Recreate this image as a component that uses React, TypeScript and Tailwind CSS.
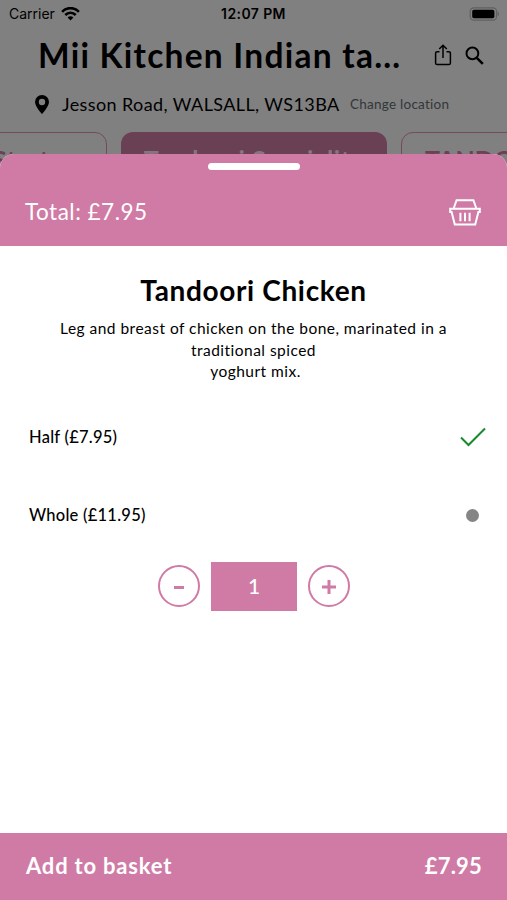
import type { ReactNode } from "react";

function StatusBar() {
  return (
    <div className="grid h-[27px] grid-cols-3 items-center pl-[9px] pr-[7px] font-['Inter',sans-serif] text-[14px]">
      <div className="flex items-center gap-[6px]">
        <span>Carrier</span>
        <svg viewBox="0 0 20 15" className="h-[14px] w-[19px]" fill="none" stroke="#000" strokeWidth="2.8">
          <path d="M1 5.2C6-.1 14-.1 19 5.2" />
          <path d="M4.4 8.6c3.2-3.2 8-3.2 11.2 0" />
          <path d="M10 14.5 6.9 11.2c1.8-1.6 4.4-1.6 6.2 0z" fill="#000" stroke="none" />
        </svg>
      </div>
      <span className="-ml-[2px] text-center text-[14px] font-semibold tracking-[0.4px] whitespace-nowrap">
        12:07 PM
      </span>
      <svg viewBox="0 0 31 14" className="h-[14px] w-[31px] justify-self-end">
        <rect x="1.2" y=".8" width="26.4" height="12.4" rx="3.6" fill="none" stroke="#606060" strokeWidth="1.2" />
        <rect x="3.2" y="2.8" width="22.2" height="8.4" rx="1.8" fill="#000" />
        <path d="M28.6 4.8c1.8.6 1.8 3.8 0 4.4z" fill="#606060" />
      </svg>
    </div>
  );
}

function RestaurantHeader() {
  return (
    <header>
      <div className="flex h-[55px] items-center pt-px pl-[38px] pr-[22px]">
        <h1 className="w-[396px] text-[33.5px] font-bold tracking-[1.25px] whitespace-nowrap">
          Mii Kitchen Indian ta…
        </h1>
        <svg viewBox="0 0 18 22" className="h-[22px] w-[18px] shrink-0" fill="none" stroke="#000" strokeWidth="1.5">
          <path d="M5.5 7.7H3.2c-1 0-1.6.6-1.6 1.6v9.6c0 1 .6 1.6 1.6 1.6h11.6c1 0 1.6-.6 1.6-1.6V9.3c0-1-.6-1.6-1.6-1.6h-2.3" />
          <path d="M9 14V1.6M5.2 5 9 1.3 12.8 5" />
        </svg>
        <svg viewBox="0 0 19 19" className="ml-[13px] h-[19px] w-[19px] shrink-0" fill="none" stroke="#000">
          <circle cx="7.4" cy="7.4" r="5.9" strokeWidth="2" />
          <path d="m11.8 11.8 6 6" strokeWidth="2.6" />
        </svg>
      </div>
      <div className="mt-[2px] flex h-[41px] items-center pl-[35px]">
        <svg viewBox="0 0 14 19" className="h-[19px] w-[14px]">
          <path
            fillRule="evenodd"
            d="M7 0a7 7 0 0 0-7 7c0 4.6 7 12 7 12s7-7.4 7-12a7 7 0 0 0-7-7zm0 3.8a3.2 3.2 0 1 1 0 6.4 3.2 3.2 0 0 1 0-6.4z"
          />
        </svg>
        <span className="ml-[13px] w-[288px] text-[18px] tracking-[0.4px] whitespace-nowrap">
          Jesson Road, WALSALL, WS13BA
        </span>
        <span className="text-[13.5px] tracking-[0.25px] whitespace-nowrap text-[#32373a]">
          Change location
        </span>
      </div>
    </header>
  );
}

function CategoryTabs() {
  return (
    <nav className="mt-[7px] flex gap-[14px] overflow-hidden text-[25px] font-bold whitespace-nowrap text-[#6d4056]">
      <div className="-ml-[30px] h-[52px] w-[137px] shrink-0 rounded-[12px] border-[1.5px] border-[#744a5f] pt-[8px] pl-[22px] leading-[36px] tracking-[0.5px]">
        Starters
      </div>
      <div className="h-[52px] w-[266px] shrink-0 rounded-[12px] bg-[#6a4055] pt-[9px] text-center leading-[36px] tracking-[0.5px] text-[#88747f]">
        Tandoori Speciality
      </div>
      <div className="h-[52px] w-[200px] shrink-0 rounded-[12px] border-[1.5px] border-[#744a5f] pt-[8px] pl-[23px] leading-[36px]">
        TANDOORI
      </div>
    </nav>
  );
}

function BasketIcon() {
  return (
    <svg viewBox="0 0 32 27" className="h-[27px] w-[32px]" fill="none" stroke="#fff" strokeWidth="2">
      <path d="M4.8 9 7.6 1.2h16.8L27.2 9" />
      <path d="M1.2 9.8h29.6v3.200h-1.4L26.2 25.6H5.8L2.6 13H1.2z" />
      <path d="M11.4 13.8v8.4M16 13.8v8.4M20.6 13.8v8.4" />
    </svg>
  );
}

function Option({ label, children }: { label: string; children: ReactNode }) {
  return (
    <div className="flex h-[78px] items-center pr-[21px] pl-[29px]">
      <span className="flex-1 pt-[3px] text-[16.5px] font-medium tracking-[0.25px]">{label}</span>
      <span className="flex w-[27px] justify-center pt-[2px]">{children}</span>
    </div>
  );
}

function Stepper() {
  const round =
    "flex h-[42px] w-[42px] items-center justify-center rounded-full border-2 border-[#cf7ba5] bg-white";
  return (
    <div className="mt-[9px] flex items-center justify-center gap-[11px] pl-px">
      <button className={round} aria-label="Remove one">
        <span className="mt-[2px] h-[3px] w-[10px] bg-[#cf7ba5]" />
      </button>
      <div className="flex h-[49px] w-[86px] items-center justify-center bg-[#cf7ba5] text-[21px] font-medium text-white">
        1
      </div>
      <button className={round} aria-label="Add one">
        <svg viewBox="0 0 14 14" className="mt-px h-[14px] w-[14px]" stroke="#cf7ba5" strokeWidth="3">
          <path d="M0 7h14M7 0v14" />
        </svg>
      </button>
    </div>
  );
}

function ItemSheet() {
  return (
    <section className="absolute inset-x-0 top-[154px] bottom-0 flex flex-col overflow-hidden rounded-t-[14px] bg-white">
      <div className="h-[92px] bg-[#cf7ba5] pt-[9px] text-white">
        <div className="mx-auto h-[7px] w-[92px] rounded-full bg-white" />
        <div className="mt-[28px] flex h-[28px] items-center justify-between pr-[26px] pl-[25px]">
          <span className="text-[22.5px] tracking-[0.5px]">Total: £7.95</span>
          <BasketIcon />
        </div>
      </div>

      <div className="flex-1">
        <h2 className="mt-[26px] text-center text-[28px] leading-[36px] font-bold tracking-[0.65px]">
          Tandoori Chicken
        </h2>
        <p className="mt-[10px] text-center text-[15.5px] leading-[21.5px] tracking-[0.47px]">
          Leg and breast of chicken on the bone, marinated in a
          <br />
          traditional spiced
          <br />
          <span className="pl-1">yoghurt mix.</span>
        </p>
        <div className="mt-[14px]">
          <Option label="Half (£7.95)">
            <svg viewBox="0 0 26 20" className="h-[20px] w-[26px]" fill="none" stroke="#168a2c" strokeWidth="2">
              <path d="m1 10.5 7.5 7.5L25 1.5" />
            </svg>
          </Option>
          <Option label="Whole (£11.95)">
            <span className="mt-px h-[13px] w-[13px] rounded-full bg-[#858585]" />
          </Option>
        </div>
        <Stepper />
      </div>

      <button className="flex h-[67px] items-center justify-between bg-[#cf7ba5] pr-[25px] pl-[26px] pb-[2px] text-[22px] font-bold text-white">
        <span className="tracking-[0.8px]">Add to basket</span>
        <span className="tracking-[0.2px]">£7.95</span>
      </button>
    </section>
  );
}

export default function App() {
  return (
    <main className="relative h-[900px] w-full overflow-hidden bg-[#808080] font-['Lato',sans-serif] text-black">
      <StatusBar />
      <RestaurantHeader />
      <CategoryTabs />
      <ItemSheet />
    </main>
  );
}
